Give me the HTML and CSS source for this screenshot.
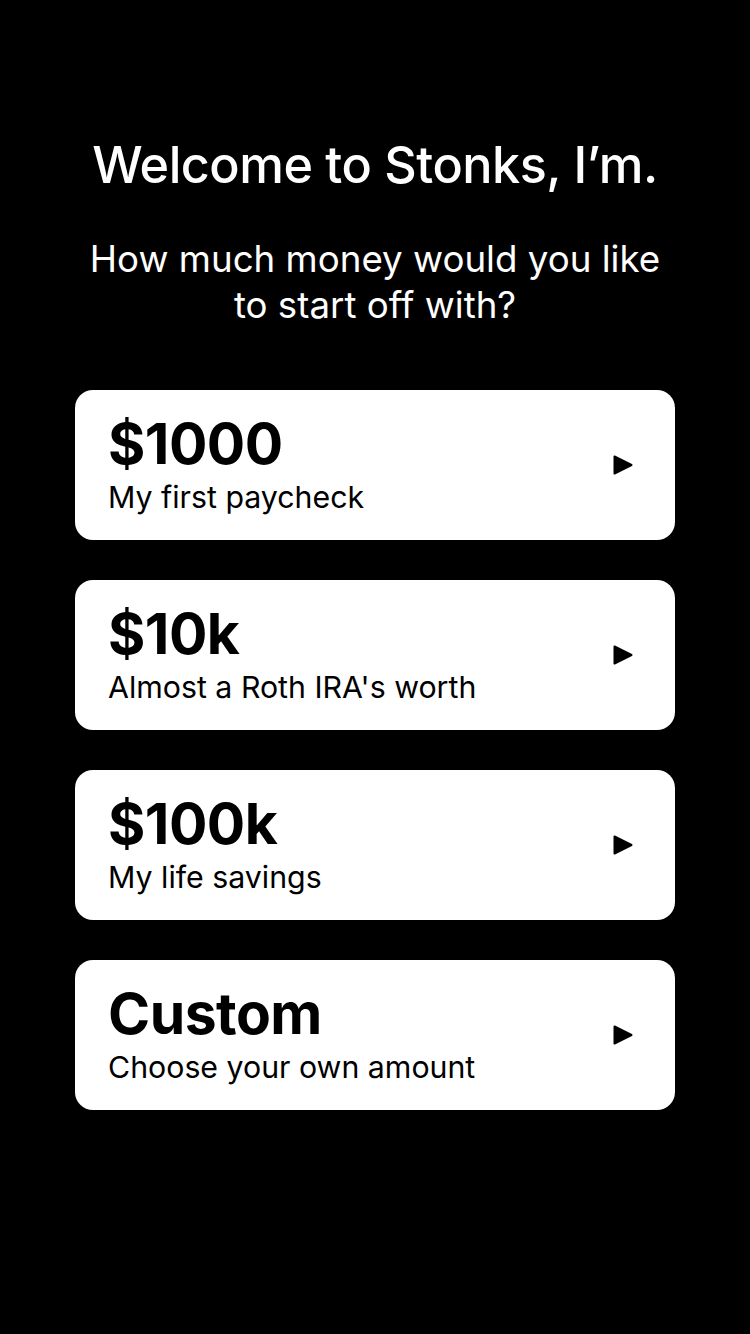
FILE: index.html
```html
<!DOCTYPE html>
<html lang="en">
<head>
<meta charset="utf-8">
<link rel="stylesheet" href="styles.css">
</head>
<body>
<main class="screen">
  <h1 class="title">Welcome to Stonks, I’m.</h1>
  <p class="subtitle">How much money would you like<br>to start off with?</p>
  <div class="options">
    <div class="card">
      <div class="text"><div class="amount">$1000</div><div class="desc">My first paycheck</div></div>
      <svg class="arrow" viewBox="0 0 20 20"><path d="M1.5 1.5 L18.5 10 L1.5 18.5 Z" fill="#000" stroke="#000" stroke-width="2" stroke-linejoin="round"/></svg>
    </div>
    <div class="card">
      <div class="text"><div class="amount">$10k</div><div class="desc">Almost a Roth IRA's worth</div></div>
      <svg class="arrow" viewBox="0 0 20 20"><path d="M1.5 1.5 L18.5 10 L1.5 18.5 Z" fill="#000" stroke="#000" stroke-width="2" stroke-linejoin="round"/></svg>
    </div>
    <div class="card">
      <div class="text"><div class="amount">$100k</div><div class="desc">My life savings</div></div>
      <svg class="arrow" viewBox="0 0 20 20"><path d="M1.5 1.5 L18.5 10 L1.5 18.5 Z" fill="#000" stroke="#000" stroke-width="2" stroke-linejoin="round"/></svg>
    </div>
    <div class="card">
      <div class="text"><div class="amount">Custom</div><div class="desc">Choose your own amount</div></div>
      <svg class="arrow" viewBox="0 0 20 20"><path d="M1.5 1.5 L18.5 10 L1.5 18.5 Z" fill="#000" stroke="#000" stroke-width="2" stroke-linejoin="round"/></svg>
    </div>
  </div>
</main>
</body>
</html>
```
FILE: styles.css
```css
* { box-sizing: border-box; }
html, body { margin: 0; padding: 0; background: #000; }
body { font-family: Inter, "Noto Sans", sans-serif; color: #fff; }
.screen {
  width: 750px;
  height: 1334px;
  padding-top: 134px;
  display: flex;
  flex-direction: column;
  align-items: center;
}
.title {
  margin: 0;
  font-size: 50.3px;
  font-weight: 500;
  line-height: 62px;
  letter-spacing: -0.5px;
  text-align: center;
}
.subtitle {
  margin: 40px 0 0;
  font-size: 36.7px;
  font-weight: 400;
  line-height: 46px;
  text-align: center;
}
.options {
  margin-top: 62px;
  display: flex;
  flex-direction: column;
  gap: 40px;
}
.card {
  width: 600px;
  height: 150px;
  background: #fff;
  border-radius: 18px;
  color: #000;
  display: flex;
  align-items: center;
  justify-content: space-between;
  padding: 0 42px 0 33px;
}
.text { display: flex; flex-direction: column; }
.amount {
  font-size: 57px;
  font-weight: 700;
  line-height: 60px;
  letter-spacing: -0.5px;
}
.desc {
  margin-top: 4px;
  font-size: 30.3px;
  line-height: 38px;
  font-weight: 400;
}
.arrow { width: 20px; height: 20px; }
```
